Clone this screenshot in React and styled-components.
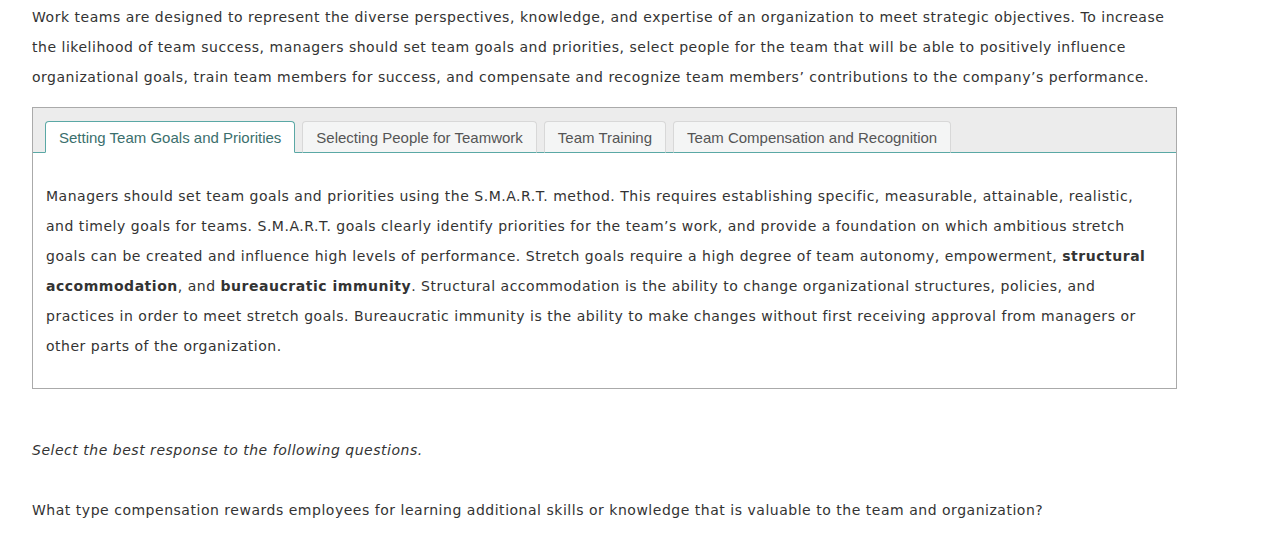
import React, { useState } from "react";
import styled, { createGlobalStyle } from "styled-components";

const GlobalStyle = createGlobalStyle`
    body {
        margin: 0;
        background: #fff;
        font-family: "DejaVu Sans", Verdana, sans-serif;
        color: #333;
    }
`;

const Page = styled.div`
    width: 1145px;
    padding: 2px 0 0 32px;
    font-size: 14px;
    line-height: 30px;
    letter-spacing: 0.52px;
`;

const Para = styled.p`
    margin: ${props => props.gap || 0}px 0 15px 0;
    font-style: ${props => props.italic ? "italic" : "normal"};
`;

const TabBox = styled.div`
    border: 1px solid #aaa;
    margin-bottom: 46px;
`;

const TabBar = styled.div`
    display: flex;
    gap: 7px;
    align-items: flex-end;
    background-color: #ececec;
    border-bottom: 1px solid #5aa8a5;
    padding: 13px 0 0 12px;
    height: 31px;
`;

const Tab = styled.button`
    font-family: "Liberation Sans", Arial, sans-serif;
    font-size: 15px;
    letter-spacing: normal;
    height: 32px;
    margin-bottom: -1px;
    padding: 0 13px;
    border: 1px solid ${props => props.active ? "#5aa8a5" : "#d8d8d8"};
    border-bottom-color: ${props => props.active ? "#fff" : "#5aa8a5"};
    border-radius: 4px 4px 0 0;
    background-color: ${props => props.active ? "#fff" : "#f4f5f5"};
    color: ${props => props.active ? "#3b6f6d" : "#555"};
    cursor: pointer;
`;

const Panel = styled.div`
    padding: 28px 13px 27px 13px;
`;

const tabs = [
    "Setting Team Goals and Priorities",
    "Selecting People for Teamwork",
    "Team Training",
    "Team Compensation and Recognition",
];

const App = () => {
    const [active, setActive] = useState(0);
    return (
        <Page>
            <GlobalStyle />
            <Para>
                Work teams are designed to represent the diverse perspectives, knowledge, and expertise of an organization to meet strategic objectives. To increase
                the likelihood of team success, managers should set team goals and priorities, select people for the team that will be able to positively influence
                organizational goals, train team members for success, and compensate and recognize team members’ contributions to the company’s performance.
            </Para>
            <TabBox>
                <TabBar>
                    {tabs.map((t, i) => (
                        <Tab key={t} active={i === active} onClick={() => setActive(i)}>{t}</Tab>
                    ))}
                </TabBar>
                <Panel>
                    Managers should set team goals and priorities using the S.M.A.R.T. method. This requires establishing specific, measurable, attainable, realistic,
                    and timely goals for teams. S.M.A.R.T. goals clearly identify priorities for the team’s work, and provide a foundation on which ambitious stretch
                    goals can be created and influence high levels of performance. Stretch goals require a high degree of team autonomy, empowerment, <b>structural
                    accommodation</b>, and <b>bureaucratic immunity</b>. Structural accommodation is the ability to change organizational structures, policies, and
                    practices in order to meet stretch goals. Bureaucratic immunity is the ability to make changes without first receiving approval from managers or
                    other parts of the organization.
                </Panel>
            </TabBox>
            <Para italic>Select the best response to the following questions.</Para>
            <Para gap={30}>
                What type compensation rewards employees for learning additional skills or knowledge that is valuable to the team and organization?
            </Para>
        </Page>
    );
};

export default App;
